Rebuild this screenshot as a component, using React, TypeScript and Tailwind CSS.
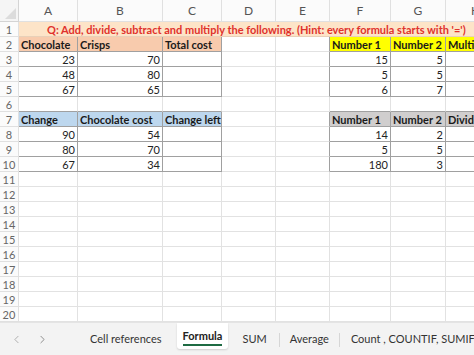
import { ChevronLeft, ChevronRight } from 'lucide-react';

const cols = ['A', 'B', 'C', 'D', 'E', 'F', 'G', 'H'];
const colWidths = [59, 85, 59, 54, 54, 61, 55, 60];

type Cell = { v?: string; kind?: 'salmon' | 'blue' | 'yellow' | 'gray'; num?: boolean };

// grid content, keyed "row-col" (col 0 = A)
const cells: Record<string, Cell> = {
  '2-0': { v: 'Chocolate', kind: 'salmon' },
  '2-1': { v: 'Crisps', kind: 'salmon' },
  '2-2': { v: 'Total cost', kind: 'salmon' },
  '3-0': { v: '23', num: true }, '3-1': { v: '70', num: true },
  '4-0': { v: '48', num: true }, '4-1': { v: '80', num: true },
  '5-0': { v: '67', num: true }, '5-1': { v: '65', num: true },
  '7-0': { v: 'Change', kind: 'blue' },
  '7-1': { v: 'Chocolate cost', kind: 'blue' },
  '7-2': { v: 'Change left', kind: 'blue' },
  '8-0': { v: '90', num: true }, '8-1': { v: '54', num: true },
  '9-0': { v: '80', num: true }, '9-1': { v: '70', num: true },
  '10-0': { v: '67', num: true }, '10-1': { v: '34', num: true },
  '2-5': { v: 'Number 1', kind: 'yellow' },
  '2-6': { v: 'Number 2', kind: 'yellow' },
  '2-7': { v: 'Multiply', kind: 'yellow' },
  '3-5': { v: '15', num: true }, '3-6': { v: '5', num: true },
  '4-5': { v: '5', num: true }, '4-6': { v: '5', num: true },
  '5-5': { v: '6', num: true }, '5-6': { v: '7', num: true },
  '7-5': { v: 'Number 1', kind: 'gray' },
  '7-6': { v: 'Number 2', kind: 'gray' },
  '7-7': { v: 'Divide', kind: 'gray' },
  '8-5': { v: '14', num: true }, '8-6': { v: '2', num: true },
  '9-5': { v: '5', num: true }, '9-6': { v: '5', num: true },
  '10-5': { v: '180', num: true }, '10-6': { v: '3', num: true },
};

const inTable = (r: number, c: number) =>
  ((r >= 2 && r <= 5) || (r >= 7 && r <= 10)) && ((c >= 0 && c <= 2) || (c >= 5 && c <= 7));

const fills = {
  salmon: 'bg-[#f8cbad]',
  blue: 'bg-[#bdd7ee]',
  yellow: 'bg-[#ffff00]',
  gray: 'bg-[#d0cece]',
};

function GridCell({ r, c }: { r: number; c: number }) {
  const cell = cells[`${r}-${c}`] ?? {};
  const darkRight = inTable(r, c) || inTable(r, c + 1);
  const darkBottom = inTable(r, c) || inTable(r + 1, c);
  return (
    <div
      className={[
        'h-[15px] flex items-center px-[2px] overflow-hidden whitespace-nowrap text-[11px] leading-none',
        darkRight ? 'border-r border-r-[#a0a0a0]' : 'border-r border-r-[#e2e2e2]',
        darkBottom ? 'border-b border-b-[#a0a0a0]' : 'border-b border-b-[#e2e2e2]',
        cell.kind ? fills[cell.kind] + ' font-bold text-[#1a1a1a]' : 'bg-white text-[#222]',
        cell.num ? 'justify-end' : 'justify-start',
      ].join(' ')}
    >
      {cell.v}
    </div>
  );
}

export default function App() {
  const rows = Array.from({ length: 20 }, (_, i) => i + 1);
  return (
    <div className="w-[474px] h-[355px] overflow-hidden bg-white font-['Lato','Liberation_Sans',sans-serif] flex flex-col">
      <div className="flex-1 overflow-hidden">
        <div
          className="grid"
          style={{ gridTemplateColumns: `19px ${colWidths.map((w) => w + 'px').join(' ')}` }}
        >
          {/* corner + column letters */}
          <div className="h-[22px] bg-[#f5f5f5] border-r border-b border-[#d4d4d4] relative">
            <div className="absolute right-[2px] bottom-[2px] w-0 h-0 border-l-[11px] border-l-transparent border-b-[11px] border-b-[#dcdcdc]" />
          </div>
          {cols.map((l) => (
            <div
              key={l}
              className="h-[22px] bg-[#fbfbfb] border-r border-b border-[#e0e0e0] flex items-center justify-center text-[12px] text-[#555]"
            >
              {l}
            </div>
          ))}

          {rows.map((r) => (
            <div key={r} className="contents">
              <div className="h-[15px] bg-[#fbfbfb] border-r border-b border-[#e0e0e0] flex items-center justify-center text-[11px] text-[#666] leading-none">
                {r}
              </div>
              {r === 1 ? (
                <div className="col-span-8 h-[15px] bg-[#fde4c8] border-b border-[#e8d0b8] flex items-center pl-[28px] whitespace-nowrap overflow-hidden text-[11px] font-bold text-[#e0322c] leading-none">
                  Q: Add, divide, subtract and multiply the following. (Hint: every formula starts with '=')
                </div>
              ) : (
                cols.map((_, c) => <GridCell key={c} r={r} c={c} />)
              )}
            </div>
          ))}
        </div>
      </div>

      {/* sheet tabs */}
      <div className="h-[33px] shrink-0 bg-[#f3f3f3] flex items-start whitespace-nowrap text-[11px] text-[#333] border-t border-[#e4e4e4]">
        <div className="shrink-0 flex items-center gap-[13px] pl-[10px] h-[32px] text-[#a0a0a0]">
          <ChevronLeft size={13} strokeWidth={1.5} />
          <ChevronRight size={13} strokeWidth={1.5} className="text-[#777]" />
        </div>
        <div className="shrink-0 ml-[41px] h-[32px] flex items-center">Cell references</div>
        <div className="shrink-0 ml-[15px] h-[26px] px-[6px] bg-white flex flex-col items-center justify-end pb-[3px] shadow-[0_1px_2px_rgba(0,0,0,0.15)] rounded-b-[3px]">
          <span className="font-bold text-[#222] leading-none">Formula</span>
          <span className="w-full h-[2px] bg-[#1e6b43] mt-[3px]" />
        </div>
        <div className="shrink-0 ml-[14px] h-[32px] flex items-center">SUM</div>
        <div className="shrink-0 ml-[12px] mt-[10px] h-[14px] w-px bg-[#d6d6d6]" />
        <div className="shrink-0 ml-[10px] h-[32px] flex items-center">Average</div>
        <div className="shrink-0 ml-[10px] mt-[10px] h-[14px] w-px bg-[#d6d6d6]" />
        <div className="shrink-0 ml-[11px] h-[32px] flex items-center">Count , COUNTIF, SUMIF</div>
      </div>
    </div>
  );
}
